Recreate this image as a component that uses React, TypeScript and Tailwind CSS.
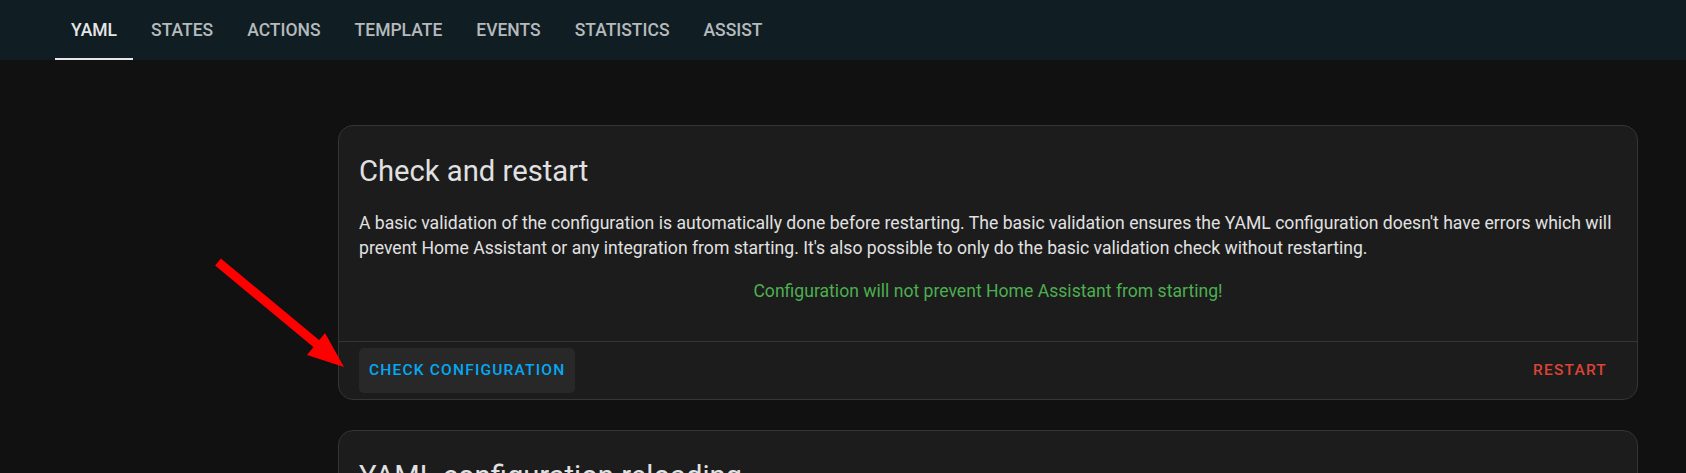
import React from 'react';

const tabs = ['YAML', 'STATES', 'ACTIONS', 'TEMPLATE', 'EVENTS', 'STATISTICS', 'ASSIST'];

function Tabs() {
  return (
    <div className="flex h-[60px] items-stretch bg-[#101e24] pl-[54px]">
      {tabs.map((tab, i) => (
        <div
          key={tab}
          className={
            'relative flex items-center px-[17px] text-[17.5px] font-medium ' +
            (i === 0 ? 'text-[#e6e6e6]' : 'text-[#b5babc]')
          }
        >
          {tab}
          {i === 0 && <div className="absolute bottom-0 left-[1px] right-[1px] h-[2px] bg-[#e6e6e6]" />}
        </div>
      ))}
    </div>
  );
}

function CheckCard() {
  return (
    <div className="w-[1300px] rounded-[15px] border border-[#353535] bg-[#1c1c1c]">
      <div className="px-[20px] pt-[25px] pb-[20px] text-[29.2px] leading-[40px] text-[#e1e1e1]">Check and restart</div>
      <div className="px-[20px] pb-[37px] text-[17.6px] leading-[25px] text-[#e1e1e1]">
        <p>
          A basic validation of the configuration is automatically done before restarting. The basic validation ensures
          the YAML configuration doesn't have errors which will prevent Home Assistant or any integration from starting.
          It's also possible to only do the basic validation check without restarting.
        </p>
        <p className="mt-[18px] text-center text-[#4caf50]">Configuration will not prevent Home Assistant from starting!</p>
      </div>
      <div className="flex items-center justify-between border-t border-[#353535] px-[20px] py-[6px]">
        <button className="h-[45px] rounded-[5px] bg-[#282828] px-[10px] text-[15.5px] font-medium tracking-[0.077em] text-[#03a9f4]">
          CHECK CONFIGURATION
        </button>
        <button className="h-[45px] rounded-[5px] px-[10px] text-[15.5px] font-medium tracking-[0.077em] text-[#db4437]">
          RESTART
        </button>
      </div>
    </div>
  );
}

function ReloadCard() {
  return (
    <div className="w-[1300px] rounded-[15px] border border-[#353535] bg-[#1c1c1c]">
      <div className="px-[20px] pt-[25px] pb-[20px] text-[29.2px] leading-[40px] text-[#e1e1e1]">
        YAML configuration reloading
      </div>
      <div className="px-[20px] pb-[40px] text-[17.6px] leading-[25px] text-[#e1e1e1]">
        Some parts of Home Assistant can reload without requiring a restart.
      </div>
    </div>
  );
}

function Arrow() {
  return (
    <svg className="pointer-events-none absolute left-0 top-0" width="400" height="400" viewBox="0 0 400 400">
      <line x1="218" y1="262" x2="318" y2="345" stroke="#ff0000" strokeWidth="9" />
      <polygon points="344,367 307,355 325,333" fill="#ff0000" />
    </svg>
  );
}

export default function App() {
  return (
    <div className="relative h-[473px] overflow-hidden bg-[#111111] font-['Roboto',sans-serif]">
      <Tabs />
      <main className="flex flex-col gap-[30px] pl-[338px] pt-[65px]">
        <CheckCard />
        <ReloadCard />
      </main>
      <Arrow />
    </div>
  );
}
